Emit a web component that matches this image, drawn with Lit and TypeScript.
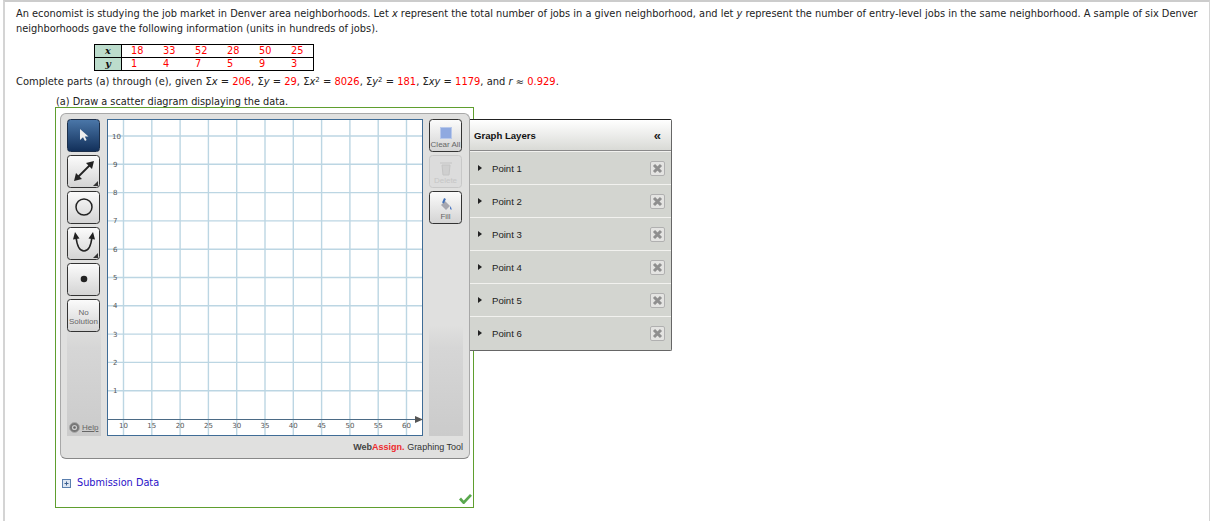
import { LitElement, html, css, svg } from "lit";
import { customElement } from "lit/decorators.js";

const FRAME_W = 316;
const FRAME_H = 317;
const xVal = (v: number) => 16.5 + ((v - 10) / 5) * 28.3;
const yVal = (v: number) => 17 + (10 - v) * 28.3;

@customElement("app-root")
export class AppRoot extends LitElement {
  static styles = css`
    :host { display: block; height: 521px; overflow: hidden; background: #fff; font-family: "DejaVu Sans", Verdana, sans-serif; font-size: 9.75px; color: #222; }
    .page { height: 521px; box-sizing: border-box; margin: 0 1px 0 3px; border-top: 2px solid #ccc; border-left: 2px solid #d4d4d4; border-right: 1px solid #d4d4d4; padding: 4px 0 0 11px; }
    p { margin: 0; line-height: 15px; width: 1190px; font-size: 9.845px; }
    i { font-style: italic; }
    .r { color: #f00; }
    sup { font-size: 7px; line-height: 0; vertical-align: 3px; }
    table { border-collapse: collapse; margin: 8px 0 0 78px; width: 220px; table-layout: fixed; }
    td { border: 1px solid #000; height: 12px; padding: 0; line-height: 12px; }
    td.h { width: 26px; background: #bcdccc; text-align: center; font-family: "DejaVu Serif", serif; font-weight: bold; font-style: italic; color: #111; }
    td.vals { border-left: 1px solid #000; color: #f00; padding-left: 9px; }
    .vals div { display: grid; grid-template-columns: repeat(6, 32px); }
    .given { margin-top: 3px; font-size: 9.94px; }
    .part { margin: 5px 0 0 40px; line-height: 15px; }
    .box { position: relative; margin: -2px 0 0 39px; width: 419px; height: 401px; border: 1px solid #5f9e2e; box-sizing: border-box; }
    .panel { position: absolute; left: 4px; top: 5px; width: 410px; height: 346px; box-sizing: border-box; background: #e0e0df; border: 1px solid #a8a8a8; border-bottom-color: #888; border-radius: 6px; padding: 5px 6px 0; display: grid; grid-template-columns: 34px 316px 34px; column-gap: 6px; grid-template-rows: 317px 1fr; }
    .rail { background: linear-gradient(#e0e0df, #e0e0df 65%, #d6d6d6 72%, #cbcbcb); height: 317px; display: flex; flex-direction: column; gap: 3.5px; position: relative; }
    .tool { width: 33px; height: 32.5px; box-sizing: border-box; border: 1px solid #333; border-radius: 3.5px; background: linear-gradient(#fbfbfb, #d4d4d4); display: flex; flex-direction: column; align-items: center; justify-content: center; position: relative; color: #666; font-family: "Liberation Sans", sans-serif; font-size: 8px; line-height: 9.5px; text-align: center; white-space: nowrap; }
    .tool.txt { padding-top: 4px; }
    .tool.on { background: linear-gradient(#4a76a8, #12305a); border-color: #1c2f4a; }
    .tool.off { border-color: #c8c8c8; background: #dcdcdc; color: #c6c6c6; }
    .corner { position: absolute; right: 1px; bottom: 1px; width: 0; height: 0; border-left: 5px solid transparent; border-bottom: 5px solid #333; }
    .help { position: absolute; left: 2px; bottom: 3px; display: flex; align-items: center; gap: 2px; font-family: "Liberation Sans", sans-serif; font-size: 8px; color: #666; text-decoration: underline; }
    .frame { display: block; }
    .foot { grid-column: 2 / 4; text-align: right; padding: 5px 0 0 0; font-family: "Liberation Sans", sans-serif; font-size: 9px; color: #333; line-height: 12px; }
    .foot b { color: #444; }
    .foot b span { color: #ee2a2e; }
    .layers { position: absolute; left: 414px; top: 11px; width: 202px; height: 232px; box-sizing: border-box; background: #d3d5d0; border: 1px solid #666; border-top-color: #222; border-left: none; border-radius: 0 2px 2px 0; font-family: "Liberation Sans", sans-serif; font-size: 9.6px; color: #222; }
    .lh { height: 30px; display: flex; align-items: center; justify-content: space-between; padding: 0 10px 0 4px; font-weight: bold; background: linear-gradient(#fff, #d9dad6); border-bottom: 1px solid #8a8a8a; color: #111; }
    .lh span:last-child { font-size: 13px; font-weight: bold; color: #222; }
    .row { height: 32px; display: flex; align-items: center; padding: 0 6px 0 8px; border-top: 1px solid #f2f2ef; box-shadow: 0 1px 0 #8f8f8f; }
    .row:last-child { box-shadow: none; }
    .row .tri { width: 0; height: 0; border-left: 4px solid #222; border-top: 3px solid transparent; border-bottom: 3px solid transparent; margin-right: 10px; }
    .row .name { flex: 1; }
    .xb { width: 15px; height: 15px; display: block; }
    .sub { position: absolute; left: 6px; top: 369px; display: flex; align-items: center; gap: 6px; color: #2a12c8; font-size: 9.75px; line-height: 12px; }
    .check { position: absolute; right: 1px; bottom: 3px; }
  `;

  private tools() {
    return html`
      <div class="tool on"><svg width="12" height="14" viewBox="0 0 12 14"><path d="M2 1 L2 12 L5 9.3 L7 13 L8.6 12 L6.8 8.6 L10.5 8.4 Z" fill="#eee"/></svg></div>
      <div class="tool"><svg width="24" height="24" viewBox="0 0 24 24"><path d="M5 19 L19 5" stroke="#222" stroke-width="1.8"/><path d="M2 22 L4 14 L10 20 Z M22 2 L20 10 L14 4 Z" fill="#222"/></svg><span class="corner"></span></div>
      <div class="tool"><svg width="20" height="20" viewBox="0 0 20 20"><circle cx="10" cy="10" r="8" fill="none" stroke="#222" stroke-width="1.5"/></svg></div>
      <div class="tool"><svg width="24" height="22" viewBox="0 0 24 22"><path d="M4 5 C5 14 8 19 12 19 C16 19 19 14 20 5" fill="none" stroke="#222" stroke-width="1.6"/><path d="M3 0 L7.5 6.5 L1 7.5 Z M21 0 L23 7.5 L16.5 6.5 Z" fill="#222"/></svg><span class="corner"></span></div>
      <div class="tool"><svg width="8" height="8" viewBox="0 0 8 8"><circle cx="4" cy="4" r="3.3" fill="#222"/></svg></div>
      <div class="tool txt"><span>No<br />Solution</span></div>
      <div class="help"><svg width="11" height="11" viewBox="0 0 11 11"><circle cx="5.5" cy="5.5" r="5" fill="#777" stroke="#aaa"/><circle cx="5.5" cy="5.5" r="2.6" fill="#ccc"/><circle cx="5.5" cy="5.5" r="1.3" fill="#666"/></svg><span>Help</span></div>
    `;
  }

  private actions() {
    return html`
      <div class="tool txt"><svg width="14" height="14" viewBox="0 0 14 14"><rect x="1.5" y="1.5" width="11" height="11" fill="#8fa9e0" stroke="#b8c8ea"/></svg><span>Clear All</span></div>
      <div class="tool off txt"><svg width="14" height="15" viewBox="0 0 14 15"><path d="M1 2 H13 M3 4 L4 14 H10 L11 4 Z" fill="#cfcfcf" stroke="#c4c4c4"/></svg><span>Delete</span></div>
      <div class="tool txt"><svg width="14" height="14" viewBox="0 0 14 14"><path d="M2 7 L6 3 L11 8 L7 12 Z" fill="#a8a8b0"/><path d="M4 5 L6 0.5" stroke="#4472b8" stroke-width="2"/><path d="M11 8 Q13 10 12.5 12 Q10.5 11 11 8Z" fill="#3b6cc0"/></svg><span>Fill</span></div>
    `;
  }

  private frame() {
    const xs = [10, 15, 20, 25, 30, 35, 40, 45, 50, 55, 60];
    const ys = [10, 9, 8, 7, 6, 5, 4, 3, 2, 1];
    return svg`
      <svg class="frame" width=${FRAME_W} height=${FRAME_H} viewBox="0 0 ${FRAME_W} ${FRAME_H}">
        <rect x="0" y="0" width=${FRAME_W} height=${FRAME_H} fill="#fff"/>
        ${xs.map((v) => svg`<line x1=${xVal(v)} x2=${xVal(v)} y1="0" y2=${FRAME_H} stroke="#bcd6e3" stroke-width="1.4"/>`)}
        ${ys.map((v) => svg`<line x1="0" x2=${FRAME_W} y1=${yVal(v)} y2=${yVal(v)} stroke="#bcd6e3" stroke-width="1.4"/>`)}
        <rect x="0.5" y="0.5" width=${FRAME_W - 1} height=${FRAME_H - 1} fill="none" stroke="#3f6c96"/>
        <line x1="0" x2="310" y1="300.5" y2="300.5" stroke="#4b6a85"/>
        <path d="M308 297 L316 300.5 L308 304 Z" fill="#555"/>
        ${ys.map((v) => svg`<text x=${v === 10 ? 5 : 6} y=${yVal(v) + 2.5} font-family="DejaVu Sans, sans-serif" font-size="7" fill="#555">${v}</text>`)}
        ${xs.map((v) => svg`<text x=${xVal(v)} y="309" text-anchor="middle" font-family="DejaVu Sans, sans-serif" font-size="7" fill="#555">${v}</text>`)}
      </svg>`;
  }

  render() {
    const layers = [1, 2, 3, 4, 5, 6];
    return html`
      <div class="page">
        <p>An economist is studying the job market in Denver area neighborhoods. Let <i>x</i> represent the total number of jobs in a given neighborhood, and let <i>y</i> represent the number of entry-level jobs in the same neighborhood. A sample of six Denver neighborhoods gave the following information (units in hundreds of jobs).</p>
        <table>
          <tr><td class="h">x</td><td class="vals"><div><span>18</span><span>33</span><span>52</span><span>28</span><span>50</span><span>25</span></div></td></tr>
          <tr><td class="h">y</td><td class="vals"><div><span>1</span><span>4</span><span>7</span><span>5</span><span>9</span><span>3</span></div></td></tr>
        </table>
        <p class="given">Complete parts (a) through (e), given Σ<i>x</i> = <span class="r">206</span>, Σ<i>y</i> = <span class="r">29</span>, Σ<i>x</i><sup>2</sup> = <span class="r">8026</span>, Σ<i>y</i><sup>2</sup> = <span class="r">181</span>, Σ<i>xy</i> = <span class="r">1179</span>, and <i>r</i> ≈ <span class="r">0.929</span>.</p>
        <div class="part">(a) Draw a scatter diagram displaying the data.</div>
        <div class="box">
          <div class="panel">
            <div class="rail">${this.tools()}</div>
            ${this.frame()}
            <div class="rail">${this.actions()}</div>
            <div class="foot"><b>Web<span>Assign.</span></b> Graphing Tool</div>
          </div>
          <div class="layers">
            <div class="lh"><span>Graph Layers</span><span>«</span></div>
            ${layers.map((n) => html`<div class="row"><span class="tri"></span><span class="name">Point ${n}</span>
              <svg class="xb" viewBox="0 0 15 15"><rect x="0.5" y="0.5" width="14" height="14" rx="1.5" fill="#e4e4e2" stroke="#b0b0b0"/><path d="M4 4 L11 11 M11 4 L4 11" stroke="#8f8f8f" stroke-width="3"/></svg></div>`)}
          </div>
          <div class="sub"><svg width="9" height="9" viewBox="0 0 9 9"><rect x="0.5" y="0.5" width="8" height="8" fill="#dde6f2" stroke="#5a7fae"/><path d="M2.5 4.5 H6.5 M4.5 2.5 V6.5" stroke="#3d6090"/></svg><span>Submission Data</span></div>
          <svg class="check" width="13" height="11" viewBox="0 0 14 12"><path d="M1 6 L5 10.5 L13 2" fill="none" stroke="#5aa84e" stroke-width="3"/></svg>
        </div>
      </div>
    `;
  }
}
